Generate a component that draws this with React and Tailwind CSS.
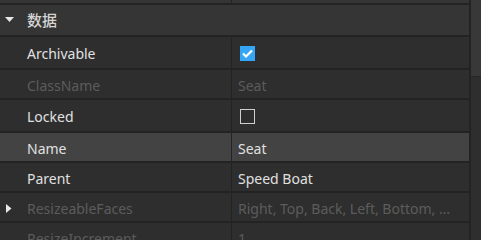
const rows = [
  { name: "", value: "", h: "h-[3px]", top: true },
  { header: "数据", h: "h-[30px]" },
  { name: "Archivable", check: true, h: "h-[31px]" },
  { name: "ClassName", value: "Seat", dim: true, h: "h-[28px]" },
  { name: "Locked", check: false, h: "h-[31px]" },
  { name: "Name", value: "Seat", sel: true, h: "h-[28px]" },
  { name: "Parent", value: "Speed Boat", h: "h-[28px]" },
  { name: "ResizeableFaces", value: "Right, Top, Back, Left, Bottom, …", dim: true, arrow: true, h: "h-[28px]" },
  { name: "ResizeIncrement", value: "1", dim: true, h: "h-[28px]" },
];

function Row({ r }) {
  if (r.header) {
    return (
      <div className={`${r.h} flex items-center bg-[#353535]`}>
        <div className="w-[27px] flex pl-[5px]">
          <svg width="9" height="6" viewBox="0 0 9 6"><path d="M0 0h9L4.5 5z" fill="#e8e8e8" /></svg>
        </div>
        <span className="text-[15px] font-medium text-[#d4d4d4]">{r.header}</span>
      </div>
    );
  }
  const bg = r.sel ? "bg-[#434343]" : r.top ? "bg-[#353535]" : "bg-[#2e2e2e]";
  const txt = r.dim ? "text-[#5c5c5c]" : "text-[#e0e0e0]";
  return (
    <div className={`${r.h} flex ${bg} overflow-hidden`}>
      <div className="w-[231px] flex items-center pt-[2px]">
        <div className="w-[27px] flex pl-[6px]">
          {r.arrow && (
            <svg width="6" height="9" viewBox="0 0 6 9"><path d="M0 0v9l5.5-4.5z" fill="#e8e8e8" /></svg>
          )}
        </div>
        <span className={`text-[14px] ${txt}`}>{r.name}</span>
      </div>
      <div className="w-px bg-[#232323]" />
      <div className="flex-1 flex items-center pl-[6px] pt-[2px] min-w-0">
        {r.check === true && (
          <div className="ml-[2px] w-[15px] h-[15px] bg-[#34a6f5] flex items-center justify-center">
            <svg width="11" height="9" viewBox="0 0 11 9"><path d="M1 4.5l3 3L10 1.5" stroke="#fff" strokeWidth="2.2" fill="none" /></svg>
          </div>
        )}
        {r.check === false && (
          <div className="ml-[2px] w-[15px] h-[15px] border border-[#cfcfcf]" />
        )}
        {r.value && <span className={`text-[14px] whitespace-nowrap ${txt}`}>{r.value}</span>}
      </div>
    </div>
  );
}

export default function App() {
  return (
    <div
      className="w-[481px] h-[240px] flex bg-[#2e2e2e] overflow-hidden"
      style={{ fontFamily: '"Noto Sans", "Noto Sans CJK SC", sans-serif' }}
    >
      <div className="w-[469px] flex flex-col">
        {rows.map((r, i) => (
          <div key={i} className="flex flex-col">
            <Row r={r} />
            {i < rows.length - 1 && <div className="h-[2px] bg-[#232323]" />}
          </div>
        ))}
      </div>
      <div className="w-[2px] bg-[#232323]" />
      <div className="flex-1 flex flex-col bg-[#2e2e2e]">
        <div className="h-[77px] bg-[#383838] border-b border-[#262626]" />
      </div>
    </div>
  );
}
